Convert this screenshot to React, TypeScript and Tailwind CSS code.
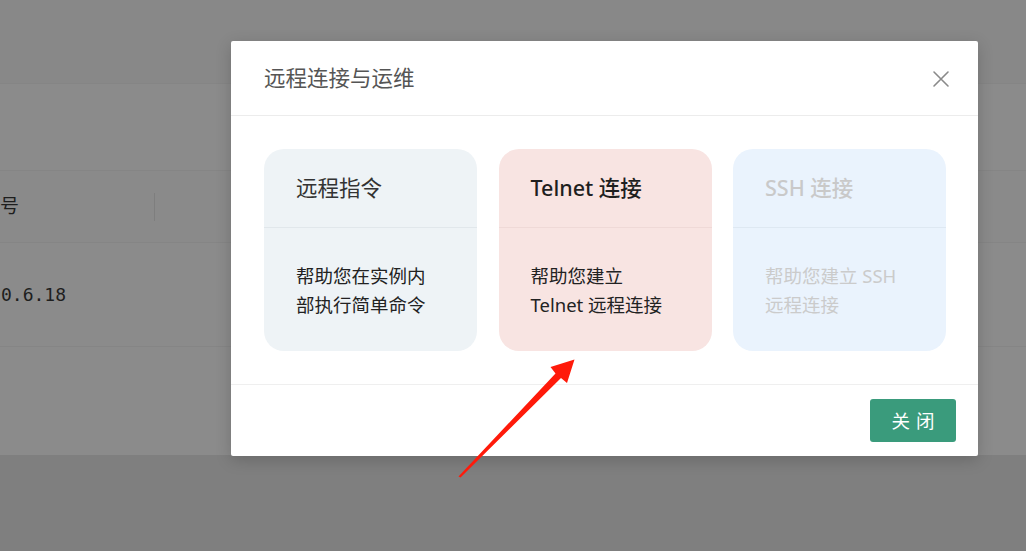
import React from "react";

const cjk = { fontFamily: '"Noto Sans", "Noto Sans CJK SC", sans-serif' };

function Card({
  title,
  lines,
  bg,
  line,
  titleCls,
  descCls,
}: {
  title: string;
  lines: string[];
  bg: string;
  line: string;
  titleCls: string;
  descCls: string;
}) {
  return (
    <div className={`w-[213px] h-[202px] rounded-[20px] flex flex-col ${bg}`}>
      <div className={`h-[79px] flex items-center px-[32px] border-b ${line}`}>
        <span className={`text-[21.5px] leading-none ${titleCls}`}>{title}</span>
      </div>
      <div className="flex-1 flex flex-col justify-center px-[32px]">
        {lines.map((l) => (
          <div key={l} className={`text-[18.5px] leading-[29px] ${descCls}`}>
            {l}
          </div>
        ))}
      </div>
    </div>
  );
}

export default function App() {
  return (
    <div className="relative w-[1026px] h-[551px] overflow-hidden bg-[#8b8b8b]" style={cjk}>
      {/* underlying page (dimmed) */}
      <div className="flex flex-col h-full">
        <div className="h-[84px] bg-[#888888] border-b border-[#858585]" />
        <div className="h-[86px]" />
        <div className="h-[73px] border-t border-b border-[#858585] flex items-center bg-[#8a8a8a]">
          <span className="text-[19px] text-[#1e1e1e] w-[154px] pl-0">号</span>
          <div className="w-px h-[28px] bg-[#7e7e7e]" />
        </div>
        <div className="h-[104px] border-b border-[#858585] flex items-center">
          <span
            className="text-[18px] text-[#1e1e1e] pl-[1px]"
            style={{ fontFamily: '"DejaVu Sans Mono", monospace' }}
          >
            0.6.18
          </span>
        </div>
        <div className="h-[108px]" />
        <div className="flex-1 bg-[#7f7f7f]" />
      </div>

      {/* modal */}
      <div className="absolute left-[231px] top-[41px] w-[747px] h-[415px] bg-white rounded-[2px] shadow-[0_4px_16px_rgba(0,0,0,0.18)] flex flex-col">
        <div className="h-[75px] flex items-center justify-between pl-[33px] pr-[28px] border-b border-[#ececec]">
          <span className="text-[21.5px] text-[#555555]">远程连接与运维</span>
          <svg width="18" height="18" viewBox="0 0 18 18" className="mt-[1px]">
            <path d="M2 2 L16 16 M16 2 L2 16" stroke="#8a8a8a" strokeWidth="1.6" strokeLinecap="round" />
          </svg>
        </div>
        <div className="h-[269px] flex items-center justify-between px-[33px] pr-[32px] border-b border-[#efefef]">
          <Card
            title="远程指令"
            lines={["帮助您在实例内", "部执行简单命令"]}
            bg="bg-[#eef3f6]"
            line="border-[#e1e7eb]"
            titleCls="text-[#333333]"
            descCls="text-[#222222]"
          />
          <Card
            title="Telnet 连接"
            lines={["帮助您建立", "Telnet 远程连接"]}
            bg="bg-[#f8e4e2]"
            line="border-[#efd9d7]"
            titleCls="text-[#1f1f1f] font-medium"
            descCls="text-[#222222]"
          />
          <Card
            title="SSH 连接"
            lines={["帮助您建立 SSH", "远程连接"]}
            bg="bg-[#eaf3fd]"
            line="border-[#dee8f2]"
            titleCls="text-[#c9c9c9] font-medium"
            descCls="text-[#cbcbcb]"
          />
        </div>
        <div className="flex-1 flex items-center justify-end pr-[22px]">
          <button className="w-[86px] h-[43px] rounded-[3px] bg-[#3a9b7c] text-white text-[18.5px] tracking-[6px] pl-[6px] flex items-center justify-center">
            关闭
          </button>
        </div>
      </div>

      {/* annotation arrow */}
      <svg className="absolute left-0 top-0 pointer-events-none" width="1026" height="551">
        <polygon points="458.5,476.5 555.5,373.5 550.5,367 574.5,359.5 567,383 561,378 460.5,477.5" fill="#ff1a0a" />
      </svg>
    </div>
  );
}
